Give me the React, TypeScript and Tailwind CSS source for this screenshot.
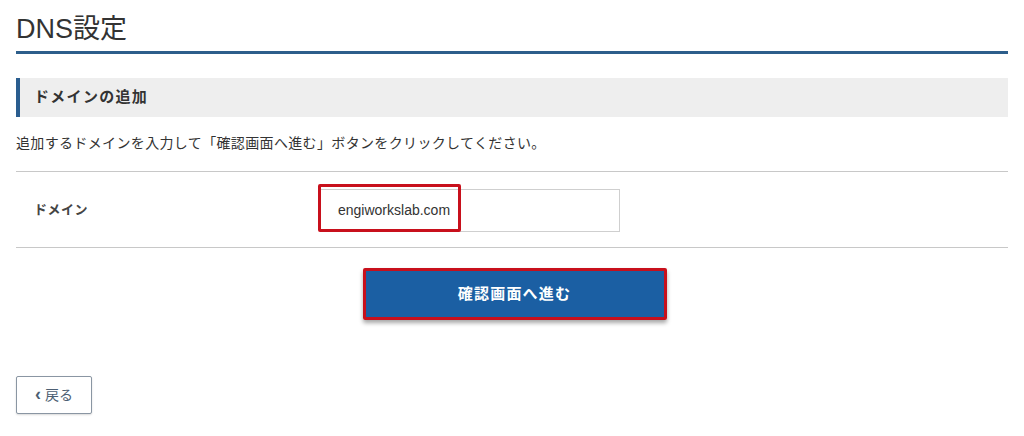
import React from "react";

const jp = { fontFamily: '"Liberation Sans", "Noto Sans CJK JP", sans-serif' };

export default function App() {
  return (
    <div className="w-[1024px] h-[436px] bg-white px-4 text-[#333]" style={jp}>
      <h1 className="pt-[13px] pb-[6px] text-[27px] leading-[32px] font-normal text-[#333] border-b-[3px] border-[#2d5e8b]">
        DNS設定
      </h1>
      <div className="mt-[24px] h-[39px] flex items-center bg-[#eeeeee] border-l-[4px] border-[#2a5d8f] pl-[14px]">
        <span className="text-[15px] font-bold text-[#333] tracking-[1.3px]">ドメインの追加</span>
      </div>
      <p className="mt-[16px] text-[14px] leading-[20px] text-[#333] tracking-[0.35px]">
        追加するドメインを入力して「確認画面へ進む」ボタンをクリックしてください。
      </p>
      <div className="mt-[18px] border-t border-b border-[#c8c8c8] h-[77px] flex items-center">
        <div className="w-[304px] pl-[18px] text-[13px] font-bold text-[#444] tracking-[0.5px]">ドメイン</div>
        <div className="relative">
          <div className="w-[300px] h-[43px] border border-[#cfcfcf] bg-white flex items-center pl-[17px] text-[14px] text-[#333] mt-[2px]">
            engiworkslab.com
          </div>
          <div className="absolute left-[-2px] top-[-3px] w-[143px] h-[48px] border-[3px] border-[#c8101c] rounded-[2px]" />
        </div>
      </div>
      <div className="flex justify-center mt-[20px] pl-[5px]">
        <div className="border-[3px] border-[#c8101c] rounded-[2px] shadow-[0_3px_4px_rgba(0,0,0,0.35)]">
          <button className="w-[298px] h-[46px] bg-[#1b5fa3] text-white text-[15px] font-bold tracking-[1.2px]">
            確認画面へ進む
          </button>
        </div>
      </div>
      <div className="mt-[56px]">
        <button className="w-[76px] h-[38px] border border-[#8a96a3] rounded-[2px] bg-white text-[14px] text-[#4d5f73] flex items-center justify-center gap-[4px] shadow-[0_1px_2px_rgba(0,0,0,0.15)]">
          <span className="text-[18px] leading-none font-bold -mt-[2px]">‹</span>
          <span>戻る</span>
        </button>
      </div>
    </div>
  );
}
